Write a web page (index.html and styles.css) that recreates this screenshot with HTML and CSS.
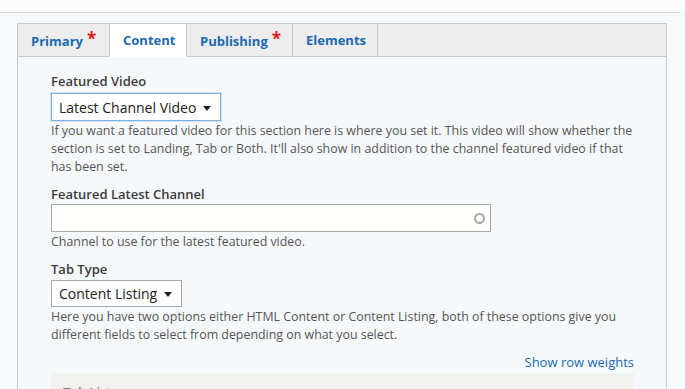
FILE: index.html
```
<!DOCTYPE html>
<html>
<head>
<meta charset="utf-8">
<link rel="stylesheet" href="styles.css">
</head>
<body>
<div class="page">
  <div class="topline"></div>
  <div class="tabs-wrap">
    <ul class="tabs">
      <li class="tab">Primary<span class="req">*</span></li>
      <li class="tab active">Content</li>
      <li class="tab">Publishing<span class="req">*</span></li>
      <li class="tab">Elements</li>
    </ul>
    <div class="panel">
      <div class="field">
        <label class="label">Featured Video</label>
        <div class="select focus">Latest Channel Video <span class="caret"></span></div>
        <p class="desc">If you want a featured video for this section here is where you set it. This video will show whether the section is set to Landing, Tab or Both. It'll also show in addition to the channel featured video if that has been set.</p>
      </div>
      <div class="field">
        <label class="label">Featured Latest Channel</label>
        <div class="autocomplete"><span class="throbber"></span></div>
        <p class="desc">Channel to use for the latest featured video.</p>
      </div>
      <div class="field field-last">
        <label class="label">Tab Type</label>
        <div class="select select-tab">Content Listing <span class="caret"></span></div>
        <p class="desc">Here you have two options either HTML Content or Content Listing, both of these options give you different fields to select from depending on what you select.</p>
      </div>
      <div class="weights"><a class="link">Show row weights</a></div>
      <div class="table-head">Tab List</div>
    </div>
  </div>
</div>
</body>
</html>
```
FILE: styles.css
```
* { box-sizing: border-box; }
html, body { margin: 0; padding: 0; }
body {
  background: #f8fbfd;
  font-family: "Open Sans", "DejaVu Sans", sans-serif;
  width: 685px;
  height: 389px;
  overflow: hidden;
}
.page {
  padding-top: 12px;
  background: linear-gradient(#fcfcfc 0, #fcfcfc 12px, #f7fafd 12px);
  height: 389px;
}
.topline {
  height: 1px;
  background: #dcdcdc;
  margin-right: 5px;
}
.tabs-wrap {
  margin: 10px 18px 0 17px;
}
.tabs {
  list-style: none;
  margin: 0;
  padding: 0;
  display: flex;
  height: 34px;
  background: #ededed;
  border: 1px solid #c8c8c8;
}
.tab {
  padding: 0 13px 0 13px;
  font-size: 13px;
  font-weight: 700;
  color: #1a6bb0;
  line-height: 32px;
  border-right: 1px solid #c8c8c8;
  height: 33px;
  white-space: nowrap;
}
.tab:first-child { width: 92px; }
.tab.active {
  background: #fff;
  width: 77px;
}
.tab:nth-child(3) { width: 106px; }
.tab:nth-child(4) { width: 85px; }
.req {
  color: #e4161b;
  font-size: 17px;
  margin-left: 4px;
  position: relative;
  top: -1px;
}
.panel {
  background: #f5f9fc;
  border-left: 1px solid #c8c8c8;
  border-right: 1px solid #c8c8c8;
  border-top: 0;
  padding: 15px 32px 0 33px;
  height: 340px;
}
.field { margin-bottom: 9px; }
.field-last { margin-bottom: 6px; }
.label {
  display: block;
  font-size: 13px;
  font-weight: 600;
  color: #3b3b3b;
  line-height: 18px;
  margin-bottom: 3px;
}
.select {
  display: inline-flex;
  align-items: center;
  height: 28px;
  padding: 0 9px 0 7px;
  background: #fff;
  border: 1px solid #a9a9a9;
  font-size: 14px;
  color: #222;
  gap: 7px;
  white-space: nowrap;
}
.select-tab {
  height: 27px;
  margin-top: -1px;
}
.select.focus {
  border-color: #7bb0dd;
  box-shadow: 0 0 0 1px #cfe3f3;
}
.caret {
  width: 0;
  height: 0;
  border-left: 4.5px solid transparent;
  border-right: 4.5px solid transparent;
  border-top: 5px solid #222;
  margin-top: 2px;
}
.desc {
  margin: 1px 0 0 0;
  font-size: 12.4px;
  line-height: 18px;
  color: #555;
}
.autocomplete {
  width: 440px;
  height: 28px;
  margin-top: -2px;
  background: #fffffb;
  border: 1px solid #aaa;
  display: flex;
  align-items: center;
  justify-content: flex-end;
  padding-right: 5px;
}
.throbber {
  width: 11px;
  height: 11px;
  border-radius: 50%;
  border: 2px solid #a8a8a8;
}
.weights {
  text-align: right;
  height: 19px;
}
.link {
  font-size: 13px;
  color: #1a6bb0;
  line-height: 18px;
}
.table-head {
  margin-top: 4px;
  background: #f2f2ee;
  height: 40px;
  padding: 10px 12px;
  font-size: 13px;
  font-weight: 600;
  color: #777;
}
```
